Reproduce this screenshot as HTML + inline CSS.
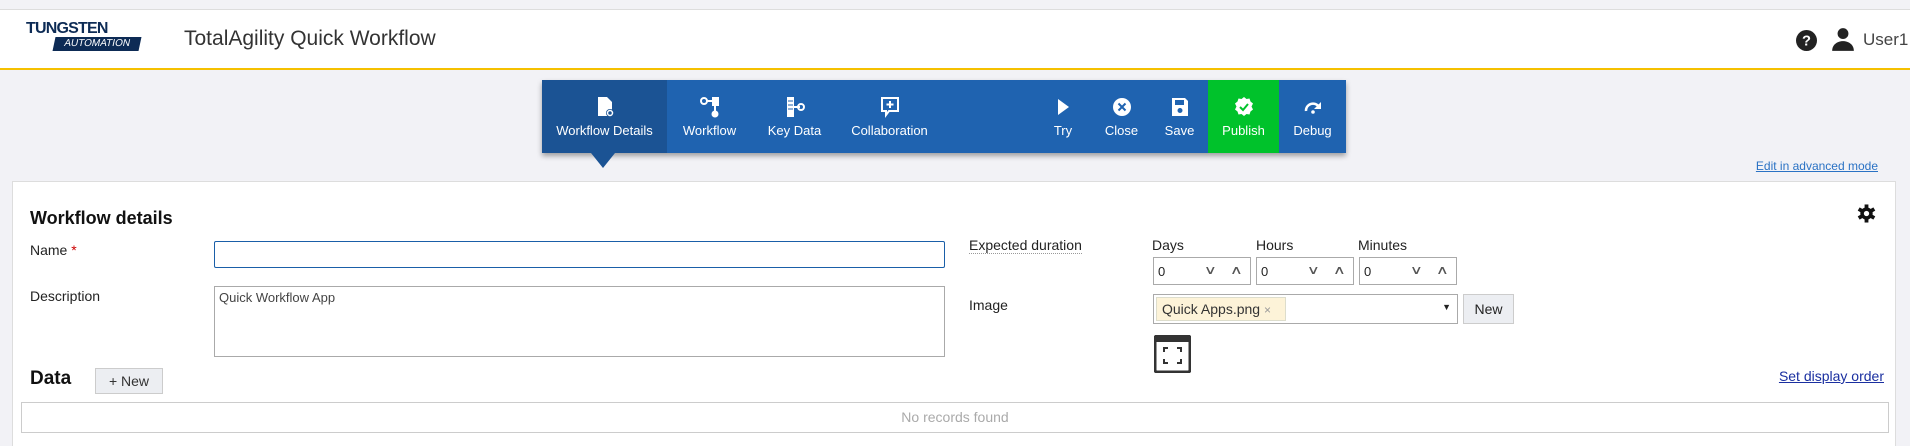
<!DOCTYPE html>
<html><head><meta charset="utf-8"><style>
*{box-sizing:border-box;margin:0;padding:0}
html,body{width:1910px;height:446px;overflow:hidden}
body{background:#f2f2f6;font-family:"Liberation Sans",sans-serif;position:relative;color:#222}
.a{position:absolute}
.hdr{left:0;top:9px;width:1910px;height:61px;background:#fff;border-top:1px solid #ddd;border-bottom:2px solid #f5c000}
.tb{left:542px;top:80px;width:804px;height:73px;background:#1f63b0;box-shadow:0 3px 5px rgba(0,0,0,.35)}
.it{position:absolute;top:0;height:73px;color:#fff;font-size:13px;text-align:center}
.it span{position:absolute;left:0;right:0;top:43px}
.it svg{position:absolute;top:16px;left:50%;margin-left:-10px}
.panel{left:12px;top:181px;width:1884px;height:265px;background:#fff;border:1px solid #ddd;border-bottom:none}
.lbl{font-size:14px;color:#222}
.box{border:1px solid #aaa;background:#fff}
.sp{position:absolute;top:5px;color:#555;font-size:12px;transform:scaleX(1.5)}
</style></head><body>
<div class="a hdr"></div>
<div class="a" style="left:26px;top:21px;width:114px;font-weight:bold;font-size:16px;color:#0d2b55;letter-spacing:-0.8px;line-height:15px">TUNGSTEN</div>
<div class="a" style="left:54px;top:37px;width:86px;height:14px;background:#0d2b55;color:#fff;font-size:10px;line-height:14px;text-align:center;transform:skewX(-12deg)">AUTOMATION</div>
<div class="a" style="left:184px;top:27px;font-size:21px;color:#333">TotalAgility Quick Workflow</div>
<svg class="a" style="left:1796px;top:30px" width="21" height="21" viewBox="0 0 20 20"><circle cx="10" cy="10" r="10" fill="#222"/><text x="10" y="15" text-anchor="middle" fill="#fff" font-size="14" font-weight="bold" font-family="Liberation Sans">?</text></svg>
<svg class="a" style="left:1830px;top:26px" width="26" height="26" viewBox="0 0 24 24"><circle cx="12" cy="7" r="5" fill="#222"/><path d="M2 23c0-6 5-9 10-9s10 3 10 9z" fill="#222"/></svg>
<div class="a" style="left:1863px;top:30px;font-size:17px;color:#444">User1</div>

<div class="a tb">
<div class="it" style="left:0;width:125px;background:#1b5394"><svg width="20" height="22" viewBox="0 0 20 22"><path d="M3 1h9l5 5v14H3z" fill="#fff"/><circle cx="15" cy="17" r="4" fill="#1b5394"/><circle cx="15" cy="17" r="2.5" fill="none" stroke="#fff" stroke-width="1.5"/></svg><span>Workflow Details</span></div>
<div class="it" style="left:125px;width:85px"><svg width="20" height="22" viewBox="0 0 20 22"><circle cx="4" cy="5" r="3" fill="none" stroke="#fff" stroke-width="2"/><path d="M7 5h5" stroke="#fff" stroke-width="2"/><rect x="12" y="1" width="7" height="9" fill="#fff"/><path d="M15 10v5" stroke="#fff" stroke-width="2"/><circle cx="15" cy="18" r="3.5" fill="#fff"/></svg><span>Workflow</span></div>
<div class="it" style="left:210px;width:85px"><svg width="20" height="22" viewBox="0 0 20 22"><rect x="2" y="1" width="7" height="20" fill="#fff"/><path d="M3 5h5M3 9h5M3 13h5" stroke="#1f63b0"/><path d="M9 11h6" stroke="#fff" stroke-width="2"/><circle cx="16" cy="11" r="3" fill="none" stroke="#fff" stroke-width="2"/></svg><span>Key Data</span></div>
<div class="it" style="left:295px;width:105px"><svg width="20" height="22" viewBox="0 0 20 22"><path d="M2 2h16v13H9l-3 4v-4H2z" fill="none" stroke="#fff" stroke-width="2"/><path d="M10 5v7M6.5 8.5h7" stroke="#fff" stroke-width="2"/></svg><span>Collaboration</span></div>
<div class="it" style="left:500px;width:42px"><svg width="20" height="22" viewBox="0 0 20 22"><path d="M5 3l11 8-11 8z" fill="#fff"/></svg><span>Try</span></div>
<div class="it" style="left:553px;width:53px"><svg width="20" height="22" viewBox="0 0 20 22"><circle cx="10" cy="11" r="9" fill="#fff"/><path d="M6.5 7.5l7 7M13.5 7.5l-7 7" stroke="#1f63b0" stroke-width="2"/></svg><span>Close</span></div>
<div class="it" style="left:615px;width:45px"><svg width="20" height="22" viewBox="0 0 20 22"><path d="M2 2h13l3 3v15H2z" fill="#fff"/><rect x="5" y="4" width="9" height="5" fill="#1f63b0"/><circle cx="10" cy="14.5" r="2.5" fill="#1f63b0"/></svg><span>Save</span></div>
<div class="it" style="left:666px;width:71px;background:#00c22b"><svg width="20" height="22" viewBox="0 0 20 22"><path d="M10 1l2.5 2 3-.5 1 3 2.5 2-1.5 3 1.5 3-2.5 2-1 3-3-.5-2.5 2-2.5-2-3 .5-1-3-2.5-2 1.5-3-1.5-3 2.5-2 1-3 3 .5z" fill="#fff"/><path d="M6 11l3 3 5-6" fill="none" stroke="#00c22b" stroke-width="2"/></svg><span>Publish</span></div>
<div class="it" style="left:737px;width:67px"><svg width="20" height="22" viewBox="0 0 20 22"><path d="M3 15a7 7 0 0 1 13-4" fill="none" stroke="#fff" stroke-width="2.5"/><path d="M18 6v7h-7z" fill="#fff"/><circle cx="10" cy="16" r="1.8" fill="#fff"/></svg><span>Debug</span></div>
</div>
<div class="a" style="left:591px;top:153px;width:0;height:0;border-left:12px solid transparent;border-right:12px solid transparent;border-top:15px solid #1b5394"></div>
<div class="a" style="right:32px;top:159px;font-size:12px;color:#2a72c4;text-decoration:underline">Edit in advanced mode</div>

<div class="a panel"></div>
<div class="a" style="left:30px;top:208px;font-size:18px;font-weight:bold;color:#111">Workflow details</div>
<svg class="a" style="left:1857px;top:204px" width="19" height="19" viewBox="0 0 20 20"><g fill="#111"><circle cx="10" cy="10" r="6.5"/><rect x="8" y="0.5" width="4" height="19"/><rect x="8" y="0.5" width="4" height="19" transform="rotate(60 10 10)"/><rect x="8" y="0.5" width="4" height="19" transform="rotate(120 10 10)"/></g><circle cx="10" cy="10" r="2.8" fill="#fff"/></svg>
<div class="a lbl" style="left:30px;top:242px">Name <span style="color:#c00">*</span></div>
<div class="a" style="left:214px;top:241px;width:731px;height:27px;border:1px solid #1a5fa8;background:#fff;border-radius:2px"></div>
<div class="a lbl" style="left:30px;top:288px">Description</div>
<div class="a box" style="left:214px;top:286px;width:731px;height:71px;font-size:13px;padding:3px 4px;color:#444">Quick Workflow App</div>
<div class="a lbl" style="left:969px;top:237px;border-bottom:1px dotted #999">Expected duration</div>
<div class="a lbl" style="left:1152px;top:237px">Days</div>
<div class="a lbl" style="left:1256px;top:237px">Hours</div>
<div class="a lbl" style="left:1358px;top:237px">Minutes</div>
<div class="a box" style="left:1153px;top:257px;width:98px;height:28px;font-size:13px;padding:6px 4px">0<span class="sp" style="left:52px">&#8744;</span><span class="sp" style="left:78px">&#8743;</span></div>
<div class="a box" style="left:1256px;top:257px;width:98px;height:28px;font-size:13px;padding:6px 4px">0<span class="sp" style="left:52px">&#8744;</span><span class="sp" style="left:78px">&#8743;</span></div>
<div class="a box" style="left:1359px;top:257px;width:98px;height:28px;font-size:13px;padding:6px 4px">0<span class="sp" style="left:52px">&#8744;</span><span class="sp" style="left:78px">&#8743;</span></div>
<div class="a lbl" style="left:969px;top:297px">Image</div>
<div class="a box" style="left:1153px;top:294px;width:305px;height:30px"><div style="position:absolute;left:2px;top:2px;height:24px;width:130px;background:#fdf3d8;border:1px solid #ddc;font-size:14px;padding:3px 5px;color:#333">Quick Apps.png <span style="color:#999;font-size:12px">×</span></div><span style="position:absolute;right:6px;top:7px;font-size:9px">▼</span></div>
<div class="a" style="left:1463px;top:294px;width:51px;height:30px;background:#eceef2;border:1px solid #ccc;font-size:14px;text-align:center;line-height:28px">New</div>
<svg class="a" style="left:1154px;top:335px" width="37" height="38" viewBox="0 0 37 38"><rect x="1" y="1" width="35" height="36" rx="2" fill="#fff" stroke="#333" stroke-width="3"/><rect x="1" y="1" width="35" height="6" fill="#333"/><path d="M10 17v-4h4M23 13h4v4M27 24v4h-4M14 28h-4v-4" fill="none" stroke="#333" stroke-width="2"/></svg>
<div class="a" style="left:30px;top:368px;font-size:19px;font-weight:bold;color:#111">Data</div>
<div class="a" style="left:95px;top:368px;width:68px;height:26px;background:#eceef2;border:1px solid #ccc;font-size:14px;text-align:center;line-height:24px;color:#333">+ New</div>
<div class="a" style="right:26px;top:368px;font-size:14px;color:#1a2fa0;text-decoration:underline">Set display order</div>
<div class="a" style="left:21px;top:402px;width:1868px;height:31px;border:1px solid #ccc;background:#fff;font-size:14px;color:#aaa;text-align:center;line-height:29px">No records found</div>
</body></html>
